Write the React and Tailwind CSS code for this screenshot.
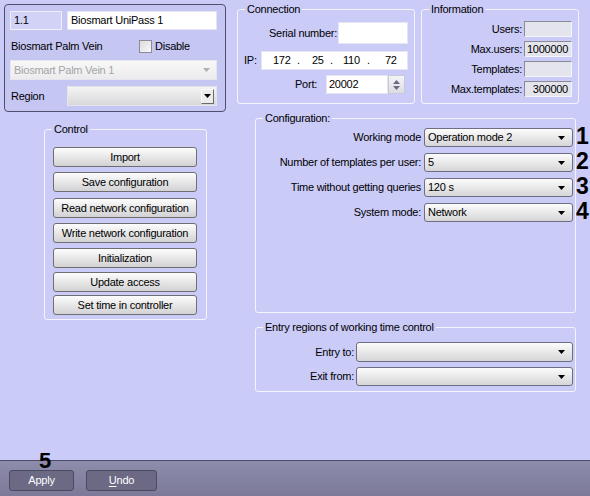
import React from "react";

function Arrow({ color = "#000" }) {
  return (
    <svg width="7" height="4" viewBox="0 0 7 4" className="shrink-0">
      <path d="M0 0H7L3.5 4Z" fill={color} />
    </svg>
  );
}

function Combo({ text, className = "" }) {
  return (
    <div
      className={`flex items-center justify-between rounded-[3px] border border-[#6e6e82] bg-linear-to-b from-[#fcfcfc] to-[#d6d6d8] pl-[3px] pr-[7px] ${className}`}
    >
      <span className="leading-none">{text}</span>
      <Arrow />
    </div>
  );
}

function Group({ title, className = "", children }) {
  return (
    <fieldset className={`relative rounded-[3px] border border-[#f4f4ff] ${className}`}>
      <legend className="ml-[7px] px-[2px] text-[11px] leading-[13px]">{title}</legend>
      {children}
    </fieldset>
  );
}

function Sunken({ value = "", className = "" }) {
  return (
    <div
      className={`flex items-center justify-end border border-t-[#8a8a96] border-l-[#8a8a96] border-b-[#f4f4ff] border-r-[#f4f4ff] bg-[#e4e4ec] pr-[3px] leading-none ${className}`}
    >
      {value}
    </div>
  );
}

function Btn({ children, className = "" }) {
  return (
    <div
      className={`flex h-[20px] w-[144px] items-center justify-center rounded-[3px] border border-[#6f6f72] bg-linear-to-b from-[#fdfdfd] to-[#d2d2d4] leading-none ${className}`}
    >
      {children}
    </div>
  );
}

export default function App() {
  return (
    <div className="relative flex h-[496px] w-[590px] flex-col overflow-hidden bg-[#cbcbf8] font-[Liberation_Sans,Arial,sans-serif] text-[11px] tracking-[-0.25px] text-black">
      <div className="flex h-[460px]">
        {/* Left column */}
        <div className="flex w-[230px] flex-col pl-[4px] pt-[4px]">
          <div className="h-[108px] w-[222px] rounded-[4px] border border-[#4e4e6e] bg-[#c6c6f2] pl-[5px] pr-[8px] pt-[6px]">
            <div className="flex h-[19px] items-center justify-between">
              <div className="flex h-[19px] w-[52px] items-center border border-[#eeeeff] bg-[#d2d2f6] pl-[3px] leading-none">
                1.1
              </div>
              <div className="flex h-[19px] w-[150px] items-center border border-[#e4e4f4] bg-white pl-[3px] leading-none">
                Biosmart UniPass 1
              </div>
            </div>
            <div className="mt-[10px] flex h-[13px] items-center">
              <span className="w-[129px] pl-[1px] leading-none">Biosmart Palm Vein</span>
              <div className="h-[13px] w-[13px] border border-[#8a8a9a] bg-linear-to-br from-[#dcdcdc] to-[#f8f8f8]" />
              <span className="ml-[3px] leading-none">Disable</span>
            </div>
            <div className="mt-[7px] flex h-[20px] items-center justify-between border border-[#e6e6f0] bg-linear-to-b from-[#f8f8f8] to-[#ececee] pl-[3px] pr-[6px] text-[#a4a4a8]">
              <span className="leading-none">Biosmart Palm Vein 1</span>
              <Arrow color="#b0b0b4" />
            </div>
            <div className="mt-[6px] flex h-[20px] items-center justify-between">
              <span className="pl-[1px] leading-none">Region</span>
              <div className="flex h-[20px] w-[150px] items-center justify-end border border-[#e4e4ee] bg-linear-to-b from-[#f4f4f4] to-[#d8d8da] pr-[2px]">
                <div className="flex h-[15px] w-[13px] items-center justify-center border border-t-[#fafafa] border-l-[#fafafa] border-b-[#6a6a6a] border-r-[#6a6a6a] bg-[#ececec]">
                  <Arrow />
                </div>
              </div>
            </div>
          </div>

          <Group title="Control" className="ml-[40px] mt-[11px] h-[197px] w-[163px]">
            <div className="ml-[8px] mt-[11px] flex flex-col">
              <Btn>Import</Btn>
              <Btn className="mt-[5px]">Save configuration</Btn>
              <Btn className="mt-[6px]">Read network configuration</Btn>
              <Btn className="mt-[5px]">Write network configuration</Btn>
              <Btn className="mt-[5px]">Initialization</Btn>
              <Btn className="mt-[4px]">Update access</Btn>
              <Btn className="mt-[3px]">Set time in controller</Btn>
            </div>
          </Group>
        </div>

        {/* Right column */}
        <div className="flex flex-1 flex-col pt-[3px]">
          <div className="flex pl-[7px]">
            <Group title="Connection" className="h-[101px] w-[178px]">
              <div className="mt-[6px] flex items-center justify-end pr-[6px]">
                <span className="mr-[1px] leading-none">Serial number:</span>
                <div className="h-[22px] w-[70px] border border-[#e6e6f2] bg-white" />
              </div>
              <div className="mt-[7px] flex items-center justify-between pl-[6px] pr-[6px]">
                <span className="leading-none">IP:</span>
                <div className="relative h-[19px] w-[147px] border border-[#e6e6f2] bg-white leading-none">
                  <span className="absolute left-[11px] top-[3px]">172</span>
                  <span className="absolute left-[35px] top-[3px]">.</span>
                  <span className="absolute left-[50px] top-[3px]">25</span>
                  <span className="absolute left-[68px] top-[3px]">.</span>
                  <span className="absolute left-[81px] top-[3px]">110</span>
                  <span className="absolute left-[105px] top-[3px]">.</span>
                  <span className="absolute left-[123px] top-[3px]">72</span>
                </div>
              </div>
              <div className="mt-[5px] flex items-center justify-end pr-[9px]">
                <span className="mr-[9px] leading-none">Port:</span>
                <div className="flex h-[19px] w-[62px] items-center border border-[#e6e6f2] bg-white pl-[2px] leading-none">
                  20002
                </div>
                <div className="flex h-[19px] w-[17px] flex-col items-center justify-center gap-[2px] border border-[#c8c8d8] bg-linear-to-b from-[#f4f4f8] to-[#dcdce4]">
                  <svg width="7" height="4" viewBox="0 0 7 4">
                    <path d="M0 4H7L3.5 0Z" fill="#6a6a80" />
                  </svg>
                  <svg width="7" height="4" viewBox="0 0 7 4">
                    <path d="M0 0H7L3.5 4Z" fill="#6a6a80" />
                  </svg>
                </div>
              </div>
            </Group>

            <Group title="Information" className="ml-[6px] h-[101px] w-[158px]">
              <div className="mt-[5px] flex flex-col gap-[4px] pr-[6px]">
                {[
                  ["Users:", ""],
                  ["Max.users:", "1000000"],
                  ["Templates:", ""],
                  ["Max.templates:", "300000"],
                ].map(([l, v]) => (
                  <div key={l} className="flex items-center justify-end">
                    <span className="mr-[2px] leading-none">{l}</span>
                    <Sunken value={v} className="h-[16px] w-[48px]" />
                  </div>
                ))}
              </div>
            </Group>
          </div>

          <Group title="Configuration:" className="ml-[25px] mt-[8px] h-[201px] w-[321px]">
            <div className="mt-[3px] flex flex-col gap-[6px] pr-[2px]">
              {[
                ["Working mode", "Operation mode 2", "1"],
                ["Number of templates per user:", "5", "2"],
                ["Time without getting queries", "120 s", "3"],
                ["System mode:", "Network", "4"],
              ].map(([l, v, n]) => (
                <div key={l} className="flex items-center justify-end">
                  <span className="mr-[3px] leading-none">{l}</span>
                  <div className="relative">
                    <Combo text={v} className="h-[19px] w-[149px]" />
                    <span className="absolute left-[152px] top-[-3px] text-[23px] font-bold leading-none tracking-normal">
                      {n}
                    </span>
                  </div>
                </div>
              ))}
            </div>
          </Group>

          <Group title="Entry regions of working time control" className="ml-[25px] mt-[8px] h-[71px] w-[321px]">
            <div className="mt-[8px] flex flex-col gap-[5px] pr-[2px]">
              <div className="flex items-center justify-end">
                <span className="mr-[2px] leading-none">Entry to:</span>
                <Combo text="" className="h-[20px] w-[217px]" />
              </div>
              <div className="flex items-center justify-end">
                <span className="mr-[2px] leading-none">Exit from:</span>
                <Combo text="" className="h-[19px] w-[217px]" />
              </div>
            </div>
          </Group>
        </div>
      </div>

      {/* Bottom bar */}
      <div className="flex h-[36px] gap-[12px] border-t border-[#4e4c66] bg-linear-to-b from-[#8e8cac] to-[#7c7a98] pl-[9px] pt-[9px]">
        <div className="flex h-[21px] w-[65px] items-center justify-center rounded-[3px] border border-[#4c4a60] bg-[#6b6984] leading-none text-white">
          Apply
        </div>
        <div className="flex h-[21px] w-[71px] items-center justify-center rounded-[3px] border border-[#4c4a60] bg-[#6b6984] leading-none text-white">
          <span className="underline underline-offset-2">U</span>ndo
        </div>
      </div>
      <span className="absolute left-[39px] top-[450px] text-[22px] font-bold leading-none">5</span>
    </div>
  );
}
